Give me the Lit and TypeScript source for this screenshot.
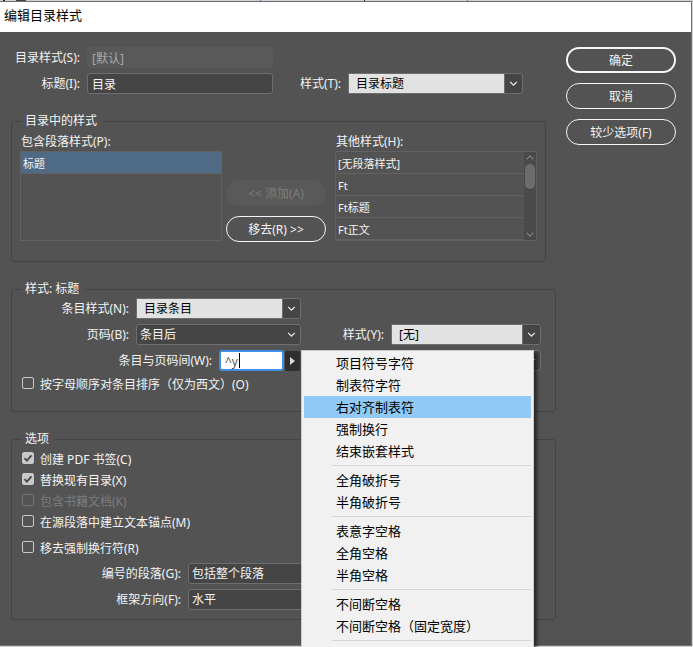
import { LitElement, html, css, svg } from "lit";
import { customElement, property } from "lit/decorators.js";
import { classMap } from "lit/directives/class-map.js";

const base = css`
  *, *::before, *::after { box-sizing: border-box; }
  button, input, select { font: inherit; color: inherit; margin: 0; }
`;

const chevron = svg`<path d="M1 1l4 4 4-4" fill="none" stroke="currentColor" stroke-width="1.3"/>`;

@customElement("drop-down")
class DropDown extends LitElement {
  @property() label = "";
  @property() value = "";
  @property({ type: Boolean }) light = false;

  static styles = [base, css`
    :host { display: block; }
    .field { display: flex; align-items: center; height: 21px; }
    .label { flex: none; width: var(--label, auto); margin-right: 7px; text-align: right; white-space: nowrap; }
    .box { position: relative; width: var(--control, 165px); height: 21px; color: #f4f4f4; }
    select {
      appearance: none; display: block; width: 100%; height: 21px; padding: 1px 20px 0 3px;
      border: 1px solid #6e6e6e; border-radius: 3px; background: #454545; outline: none;
    }
    .light select {
      padding-left: 7px; color: #000; border-radius: 0 3px 3px 0;
      background: linear-gradient(to left, #454545 17px, #6e6e6e 17px, #6e6e6e 18px, #e2e2e2 18px);
    }
    svg { position: absolute; right: 5px; top: 8px; width: 9px; height: 5px; pointer-events: none; }
  `];

  render() {
    return html`
      <label class="field">
        <span class="label">${this.label}</span>
        <span class=${classMap({ box: true, light: this.light })}>
          <select aria-label=${this.label || "样式"}><option>${this.value}</option></select>
          <svg viewBox="0 0 10 6">${chevron}</svg>
        </span>
      </label>`;
  }
}

@customElement("tick-box")
class TickBox extends LitElement {
  @property() label = "";
  @property({ type: Boolean }) checked = false;
  @property({ type: Boolean }) disabled = false;

  static styles = [base, css`
    :host { display: block; }
    label { display: flex; align-items: flex-start; gap: 6px; height: 16px; position: relative; white-space: nowrap; }
    input {
      appearance: none; width: 12px; height: 12px; margin-top: 1px; border: 1px solid #c8c8c8;
      border-radius: 2px; background: transparent;
    }
    input:checked { background: #c8c8c8; border-color: #c8c8c8; }
    input:disabled { border-color: #737373; }
    .disabled { color: #7d7d7d; }
    .text { padding-top: 1px; }
    svg { position: absolute; left: 1px; top: 2px; width: 10px; height: 10px; pointer-events: none; }
  `];

  render() {
    return html`
      <label class=${classMap({ disabled: this.disabled })}>
        <input type="checkbox" .checked=${this.checked} ?disabled=${this.disabled} />
        ${this.checked
          ? html`<svg viewBox="0 0 10 10"><path d="M1.5 5.2l2.4 2.5 4.6-5.4" fill="none" stroke="#484848" stroke-width="1.8"/></svg>`
          : null}
        <span class="text">${this.label}</span>
      </label>`;
  }
}

@customElement("style-list")
class StyleList extends LitElement {
  @property() label = "";
  @property({ attribute: false }) items: string[] = [];
  @property({ type: Number }) selected = -1;
  @property({ type: Boolean }) scroller = false;

  static styles = [base, css`
    :host { display: block; }
    .caption { height: 17px; line-height: 16px; padding-left: 1px; }
    .frame { display: flex; height: 90px; border: 1px solid #626262; overflow: hidden; }
    ul { flex: 1; list-style: none; margin: 0; padding: 0; font-size: 11px; }
    li { height: 22px; line-height: 24px; padding-left: 2px; border-bottom: 1px solid #626262; }
    li.selected { background: #4f6a85; }
    .bar {
      width: 12px; background: #4a4a4a; color: #8c8c8c; display: flex; flex-direction: column;
      align-items: center; padding: 3px 0;
    }
    .bar svg { width: 8px; height: 5px; }
    .up { transform: rotate(180deg); }
    .thumb { width: 10px; height: 25px; border-radius: 5px; background: #6c6c6c; margin: 4px 0 auto; }
  `];

  render() {
    return html`
      <div class="caption" id="cap">${this.label}</div>
      <div class="frame">
        <ul role="listbox" aria-labelledby="cap">
          ${this.items.map((t, i) => html`
            <li role="option" aria-selected=${i === this.selected} class=${classMap({ selected: i === this.selected })}>${t}</li>`)}
        </ul>
        ${this.scroller ? html`
          <div class="bar">
            <svg class="up" viewBox="0 0 10 6">${chevron}</svg>
            <div class="thumb"></div>
            <svg viewBox="0 0 10 6">${chevron}</svg>
          </div>` : null}
      </div>`;
  }
}

const MENU = [
  ["项目符号字符", "制表符字符", "右对齐制表符", "强制换行", "结束嵌套样式"],
  ["全角破折号", "半角破折号"],
  ["表意字空格", "全角空格", "半角空格"],
  ["不间断空格", "不间断空格（固定宽度）"],
];

@customElement("char-menu")
class CharMenu extends LitElement {
  static styles = [base, css`
    :host { display: block; }
    .menu {
      width: 233px; padding: 1px 2px 12px; background: #f1f1f1; border: 1px solid #cccccc;
      box-shadow: 3px 3px 3px rgba(0, 0, 0, 0.5); color: #000; font-size: 13px;
    }
    button {
      display: block; width: 100%; height: 22px; padding: 0 0 0 32px; border: 0;
      background: none; text-align: left; line-height: 20px; white-space: nowrap;
    }
    .current { background: #91c9f7; }
    hr { height: 1px; margin: 3px 0 3px 28px; border: 0; background: #d5d5d5; }
  `];

  render() {
    return html`
      <div class="menu" role="menu">
        ${MENU.map((group) => html`
          ${group.map((t) => html`
            <button role="menuitem" class=${classMap({ current: t === "右对齐制表符" })}>${t}</button>`)}
          <hr />`)}
      </div>`;
  }
}

@customElement("app-root")
class AppRoot extends LitElement {
  static styles = [base, css`
    :host {
      box-sizing: border-box; display: flex; flex-direction: column; min-height: 100vh; overflow: hidden;
      padding: 1px 1px 1px 0;
      font: 12px/16px "Noto Sans", "Noto Sans CJK SC", sans-serif; color: #f4f4f4;
      background:
        linear-gradient(#222, #222) 3px 0 / 2px 1px no-repeat,
        linear-gradient(#444, #444) 16px 0 / 10px 1px no-repeat,
        linear-gradient(#3b7be0, #3b7be0) 260px 0 / 1px 1px no-repeat,
        linear-gradient(#222, #222) 364px 0 / 1px 1px no-repeat,
        linear-gradient(#6a6ac0, #6a6ac0) 467px 0 / 1px 1px no-repeat,
        #d2d2d2;
    }
    .window {
      flex: 1; display: flex; flex-direction: column; background: #535353;
      border: 1px solid #707070; border-left: 0;
    }
    h1 {
      margin: 0; height: 30px; padding-left: 4px; background: #fff; color: #000;
      font-size: 13px; font-weight: 400; line-height: 27px;
    }
    .body { flex: 1; display: flex; gap: 10px; padding: 15px 15px 20px 11px; }
    .main { flex: 1; display: flex; flex-direction: column; gap: 19px; }
    .stack { display: flex; flex-direction: column; gap: 5px; }
    .row { display: flex; align-items: center; height: 21px; }
    .text-label { flex: none; margin-right: 7px; text-align: right; white-space: nowrap; }
    .top .text-label { width: 69px; }
    .top input {
      width: 186px; height: 21px; padding: 1px 4px 0; border: 1px solid #6e6e6e;
      border-radius: 3px; background: #454545; outline: none;
    }
    .top input:disabled { border-color: #595959; background: #595959; color: #a8a8a8; }
    .top drop-down { --label: 68px; --control: 175px; }

    fieldset { margin: 0; min-width: 0; border: 1px solid #444; border-radius: 3px; }
    legend { height: 16px; padding: 0 6px 0 3px; }
    .contents { margin-right: 10px; padding: 5px 8px 20px; }
    .contents legend { margin-left: 2px; }
    .lists { display: flex; align-items: flex-end; }
    style-list { flex: 1; }
    .movers { display: flex; flex-direction: column; gap: 10px; width: 100px; margin: 0 9px -1px 4px; }
    .pill {
      height: 26px; padding: 2px 0 0; border: 1px solid #f4f4f4; border-radius: 13px;
      background: none; text-align: center; white-space: nowrap;
    }
    .pill:disabled { background: #595959; border-color: #595959; color: #7d7d7d; }
    .pill.default { border-width: 2px; }

    .entry { padding: 1px 14px 19px 10px; }
    .entry .row { justify-content: space-between; }
    .entry drop-down { --label: 107px; }
    .entry .second { --label: auto; --control: 150px; }
    .between { display: flex; align-items: center; position: relative; }
    .between .text-label { width: 190px; }
    .between input {
      width: 65px; height: 21px; padding: 1px 4px 0; border: 2px solid #3f8ee8; border-radius: 3px;
      background: #fff; color: #555; outline: none;
    }
    .caret { position: absolute; left: 217px; top: 3px; width: 1px; height: 15px; background: #000; }
    .flyout {
      display: grid; place-items: center; width: 15px; height: 20px; margin-left: 1px; padding: 0;
      border: 0; border-radius: 2px; background: #2e2e2e; color: #dcdcdc;
    }
    .flyout svg { width: 5px; height: 8px; }
    char-menu { position: absolute; z-index: 2; left: 279px; top: 0; }

    .options { padding: 4px 14px 9px 10px; }
    .options drop-down { --label: 159px; }
    .loose { padding: 5px 0 2px; }

    .actions { display: flex; flex-direction: column; gap: 10px; width: 110px; }
  `];

  render() {
    return html`
      <section class="window" role="dialog" aria-labelledby="title">
        <h1 id="title">编辑目录样式</h1>
        <div class="body">
          <div class="main">
            <div class="stack top">
              <div class="row">
                <label class="text-label" for="toc">目录样式(S):</label>
                <input id="toc" value="[默认]" disabled />
              </div>
              <div class="row">
                <label class="text-label" for="heading">标题(I):</label>
                <input id="heading" value="目录" />
                <drop-down light label="样式(T):" value="目录标题"></drop-down>
              </div>
            </div>

            <fieldset class="contents">
              <legend>目录中的样式</legend>
              <div class="lists">
                <style-list label="包含段落样式(P):" .items=${["标题"]} .selected=${0}></style-list>
                <div class="movers">
                  <button class="pill" disabled>&lt;&lt; 添加(A)</button>
                  <button class="pill">移去(R) &gt;&gt;</button>
                </div>
                <style-list scroller label="其他样式(H):" .items=${["[无段落样式]", "Ft", "Ft标题", "Ft正文"]}></style-list>
              </div>
            </fieldset>

            <fieldset class="entry">
              <legend>样式: 标题</legend>
              <div class="stack">
                <drop-down light label="条目样式(N):" value="目录条目"></drop-down>
                <div class="row">
                  <drop-down label="页码(B):" value="条目后"></drop-down>
                  <drop-down class="second" light label="样式(Y):" value="[无]"></drop-down>
                </div>
                <div class="row">
                  <div class="between">
                    <label class="text-label" for="between">条目与页码间(W):</label>
                    <input id="between" value="^y" />
                    <span class="caret"></span>
                    <button class="flyout" aria-label="特殊字符">
                      <svg viewBox="0 0 5 8"><path d="M0 0l5 4-5 4z" fill="currentColor"/></svg>
                    </button>
                    <char-menu></char-menu>
                  </div>
                  <drop-down class="second"></drop-down>
                </div>
                <tick-box label="按字母顺序对条目排序（仅为西文）(O)"></tick-box>
              </div>
            </fieldset>

            <fieldset class="options">
              <legend>选项</legend>
              <div class="stack">
                <tick-box checked label="创建 PDF 书签(C)"></tick-box>
                <tick-box checked label="替换现有目录(X)"></tick-box>
                <tick-box disabled label="包含书籍文档(K)"></tick-box>
                <tick-box label="在源段落中建立文本锚点(M)"></tick-box>
                <tick-box class="loose" label="移去强制换行符(R)"></tick-box>
                <drop-down label="编号的段落(G):" value="包括整个段落"></drop-down>
                <drop-down label="框架方向(F):" value="水平"></drop-down>
              </div>
            </fieldset>
          </div>
          <div class="actions">
            <button class="pill default">确定</button>
            <button class="pill">取消</button>
            <button class="pill">较少选项(F)</button>
          </div>
        </div>
      </section>`;
  }
}
